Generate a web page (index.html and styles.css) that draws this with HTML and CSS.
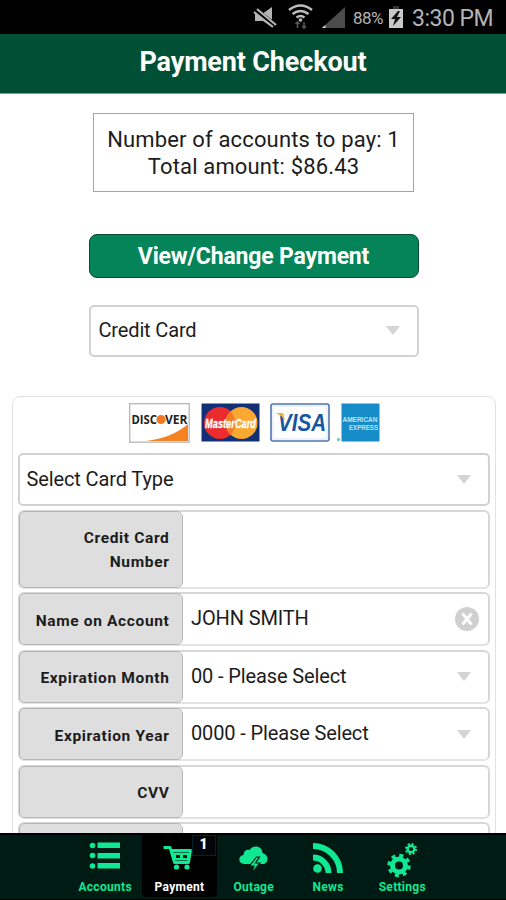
FILE: index.html
```html
<!DOCTYPE html>
<html lang="en">
<head>
<meta charset="utf-8">
<title>Payment Checkout</title>
<link rel="stylesheet" href="styles.css">
</head>
<body>
<div class="screen">
  <div class="status">
    <svg class="status-icons" width="100" height="34" viewBox="0 0 100 34">
      <path d="M8 14h7L25 7v20l-9-6H8z" fill="#b4b4b4"/>
      <path d="M7 9l22 17" stroke="#000" stroke-width="5"/>
      <path d="M7 12l19 15M10 9l19 16" stroke="#b4b4b4" stroke-width="2.200"/>
      <g fill="none" stroke="#bdbdbd" stroke-width="2.400"><path d="M42 10q11.500-9 23 0M45.500 14q8-6 16 0M49.500 17.500q4-3 8 0"/></g>
      <circle cx="53.500" cy="20" r="1.800" fill="#bdbdbd"/>
      <path d="M50.500 28v-6m-2 2l2-2 2 2M57 22v6m-2-2l2 2 2-2" fill="none" stroke="#555" stroke-width="1.600"/>
      <path d="M75 28L98 7v21z" fill="#4b4b4b"/><path d="M75 28l3.500-3v3z" fill="#ddd"/>
    </svg>
    <span class="percent">88%</span>
    <svg class="battery" width="16" height="24" viewBox="0 0 16 24"><path d="M5 1h6v3H5z" fill="#333"/><path d="M1 4h14v19H1z" fill="#c9c9c9"/><path d="M10 6l-7 8h4l-2 7 8-9H9l3-6z" fill="#111"/></svg>
    <span class="clock">3:30 PM</span>
  </div>
  <header class="header"><h1>Payment Checkout</h1></header>
  <main class="content">
    <div class="summary"><span class="count">Number of accounts to pay: 1</span><span class="total">Total amount: $86.43</span></div>
    <div class="button"><span>View/Change Payment</span></div>
    <div class="select method"><span>Credit Card</span><i class="arrow"></i></div>
    <section class="panel">
      <svg class="cards" width="252" height="40" viewBox="0 0 252 40">
        <rect x=".7" y=".7" width="59.500" height="38.500" fill="#fff" stroke="#b9b6b8" stroke-width="1.300"/>
        <path d="M17 38q26-3 42-17v17z" fill="#f58220"/>
        <text x="2.500" y="21" class="discover" textLength="25.500" lengthAdjust="spacingAndGlyphs">DISC</text>
        <text x="36" y="21" class="discover" textLength="22.500" lengthAdjust="spacingAndGlyphs">VER</text>
        <circle cx="32" cy="16.500" r="4.600" fill="#f37a20"/>
        <rect x="72.500" y=".5" width="58" height="38" fill="#123078"/>
        <circle cx="91" cy="20" r="16" fill="#eb2b2d"/><circle cx="112.500" cy="20" r="16" fill="#faa832"/>
        <path d="M101.700 8.200q9 11.800 0 23.600q-9-11.800 0-23.600" fill="#f27a27"/>
        <text x="76" y="24.500" class="mastercard" textLength="51" lengthAdjust="spacingAndGlyphs">MasterCard</text>
        <rect x="142" y="1" width="58" height="37" rx="2" fill="#fff" stroke="#4f75ae" stroke-width="1.600"/>
        <rect x="144" y="3" width="54" height="33" fill="none" stroke="#dbe5f4"/>
        <text x="149" y="27.500" class="visa" textLength="48" lengthAdjust="spacingAndGlyphs">VISA</text>
        <path d="M146 10h8l2 8q-3-6-10-8" fill="#f4b331"/>
        <rect x="212.500" y=".5" width="38" height="38" fill="#168cc8"/>
        <g class="amex"><text x="213.500" y="19" textLength="35" lengthAdjust="spacingAndGlyphs">AMERICAN</text><text x="220" y="27" textLength="29" lengthAdjust="spacingAndGlyphs">EXPRESS</text></g>
        <circle cx="209.500" cy="36.500" r="1.700" fill="#7dc7bd"/>
      </svg>
      <div class="select type"><span>Select Card Type</span><i class="arrow"></i></div>
      <div class="row tall"><div class="label"><span>Credit Card<br>Number</span></div></div>
      <div class="row"><div class="label"><span>Name on Account</span></div><span class="value">JOHN SMITH</span><svg class="clear" width="24" height="24" viewBox="0 0 24 24"><circle cx="12" cy="12" r="12" fill="#d0d0d0"/><path d="M7.500 6.500l9 11m0-11l-9 11" stroke="#fff" stroke-width="2.800"/></svg></div>
      <div class="row"><div class="label"><span>Expiration Month</span></div><span class="value">00 - Please Select</span><i class="arrow"></i></div>
      <div class="row"><div class="label"><span>Expiration Year</span></div><span class="value">0000 - Please Select</span><i class="arrow"></i></div>
      <div class="row"><div class="label"><span>CVV</span></div></div>
      <div class="row"><div class="label"></div></div>
    </section>
  </main>
  <nav class="nav">
    <div class="tab"><svg width="40" height="40" viewBox="0 0 40 40"><g fill="#10e894"><circle cx="7.500" cy="7.500" r="2.800"/><circle cx="7.500" cy="17.500" r="2.800"/><circle cx="7.500" cy="28" r="2.800"/><path d="M12.500 4.500H35v5.500H12.500zM12.500 15H35v5.500H12.500zM12.500 25H35v5.500H12.500z"/></g></svg><span>Accounts</span></div>
    <div class="tab active"><svg width="40" height="40" viewBox="0 0 40 40"><path d="M4.500 9.500H11l4.500 15h14l2-12H12" fill="none" stroke="#10e894" stroke-width="2.800" stroke-linejoin="round"/><path d="M14 18.500h16" stroke="#10e894" stroke-width="8"/><path d="M17 17h4v3h-4zM24 17h4v3h-4z" fill="#00180f"/><circle cx="17.500" cy="29" r="2.600" fill="#10e894"/><circle cx="28" cy="29" r="2.600" fill="#10e894"/></svg><span>Payment</span><b class="badge">1</b></div>
    <div class="tab"><svg width="40" height="40" viewBox="0 0 40 40"><path d="M10 26a4.500 4.500 0 0 1-.5-9c0-4 3-6 6-5 4-6 13-4 13 3 7 2 6 10 1 11z" fill="#10e894"/><path d="M22.500 19l-7 9h4.500l-3 8 9-11h-4.500l4-6z" fill="#10e894" stroke="#001b13" stroke-width="1.200"/></svg><span>Outage</span></div>
    <div class="tab"><svg width="40" height="40" viewBox="0 0 40 40"><circle cx="9.500" cy="30.500" r="4.300" fill="#10e894"/><path d="M5 19.500a15.500 15.500 0 0 1 15.500 15.500M5 8a27 27 0 0 1 27 27" fill="none" stroke="#10e894" stroke-width="6"/></svg><span>News</span></div>
    <div class="tab"><svg width="40" height="40" viewBox="0 0 40 40"><g fill="none" stroke="#10e894"><circle cx="17" cy="27.500" r="6.500" stroke-width="5"/><circle cx="17" cy="27.500" r="10" stroke-width="3.400" stroke-dasharray="3.927 3.927"/><circle cx="29" cy="11" r="3.300" stroke-width="2.400"/><circle cx="29" cy="11" r="5.100" stroke-width="2" stroke-dasharray="2.003 2.003"/></g></svg><span>Settings</span></div>
  </nav>
</div>
</body>
</html>
```
FILE: styles.css
```css
* { box-sizing: border-box; }
body { margin: 0; background: #fff; color: #1c1c1c; font-family: Roboto, "Liberation Sans", sans-serif; }
.screen { width: 506px; height: 900px; display: flex; flex-direction: column; overflow: hidden; }
.status { height: 34px; flex: none; background: #000; display: flex; align-items: center; padding-left: 247px; color: #b4b4b4; }
.status-icons { flex: none; }
.percent { width: 31px; margin-left: 6px; margin-top: 1px; font-size: 17px; letter-spacing: -.5px; }
.battery { margin-left: 4px; margin-top: -1px; flex: none; }
.clock { margin-left: 8px; margin-top: 3px; font-size: 23px; white-space: nowrap; letter-spacing: -.5px; }
.header { height: 60px; flex: none; background: #005035; border-bottom: 1px solid #889990; display: flex; justify-content: center; padding-top: 13px; }
h1 { margin: 0; color: #fff; font-size: 27px; line-height: 31px; font-weight: 700; letter-spacing: -.15px; white-space: nowrap; }
.content { flex: 1; min-height: 0; overflow: hidden; }
.summary { width: 321px; height: 79px; margin: 19px 0 0 93px; border: 1.500px solid #a5a5a5; display: flex; flex-direction: column; align-items: center; padding-top: 12px; font-size: 22px; line-height: 27px; letter-spacing: .16px; white-space: nowrap; }
.button { width: 330px; height: 44px; margin: 42px 0 0 88.500px; border: 1px solid #064a33; border-radius: 8px; background: #048458; display: flex; align-items: center; justify-content: center; color: #fff; font-size: 23px; letter-spacing: -.18px; font-weight: 700; }
.select { display: flex; align-items: center; justify-content: space-between; border: 2px solid #d2d2d2; border-radius: 5px; white-space: nowrap; }
.method { width: 330px; height: 52px; margin: 27px 0 0 88.500px; padding: 0 17px 2px 8px; font-size: 20px; letter-spacing: -.15px; }
.arrow { width: 0; height: 0; border: 7px solid transparent; border-top: 9px solid #d4d4d4; border-bottom: 0; flex: none; }
.panel { width: 484px; height: 520px; margin: 39px 0 0 11.500px; padding: 6px 5px 0 5px; border: 1.500px solid #e2e2e2; border-radius: 8px; }
.cards { display: block; margin-left: 111px; }
.discover { font: 700 12px "Open Sans", sans-serif; fill: #222; }
.mastercard { font: italic 700 12px "Liberation Sans", sans-serif; fill: #fff; stroke: #fff; stroke-width: .3px; }
.visa { font: italic 700 23px "Liberation Sans", sans-serif; fill: #1557a0; }
.amex { font: 700 7px "Liberation Sans", sans-serif; fill: #bce5f4; }
.type { height: 53px; margin-top: 10px; padding: 0 17px 1px 7px; font-size: 20px; letter-spacing: -.12px; }
.row { height: 54px; margin-top: 3.500px; border: 2px solid #d7d7d7; border-bottom-color: #e3e3e3; border-radius: 6px; display: flex; align-items: center; padding-right: 17px; }
.row.tall { height: 79px; }
.label { width: 162.500px; height: 100%; flex: none; outline: 1px solid #b5b5b5; background: #dedede; border-radius: 5px; display: flex; align-items: center; justify-content: flex-end; padding: 3px 12.500px 0 0; text-align: right; font-size: 15.500px; line-height: 24px; font-weight: 700; letter-spacing: .65px; white-space: nowrap; }
.tall .label { padding-top: 1px; }
.value { flex: 1; padding: 0 0 2px 9px; font-size: 20px; letter-spacing: -.13px; white-space: nowrap; }
.clear { margin-right: -8px; flex: none; }
.nav { height: 67px; flex: none; display: flex; background: #001b13; border-top: 2px solid #000; border-bottom: 1px solid #000; padding-left: 68px; }
.tab { width: 74.300px; height: 62px; position: relative; display: flex; flex-direction: column; align-items: center; color: #10e894; font-size: 12px; font-weight: 700; line-height: 14px; letter-spacing: .3px; }
.tab svg { height: 40px; margin-top: 3px; flex: none; }
.tab span { margin-top: 2px; white-space: nowrap; }
.active { background: #000; color: #fff; border-radius: 0 0 4px 4px; }
.badge { position: absolute; right: 1px; top: 0; width: 24px; height: 21px; border: 1px solid #09202b; background: #020608; text-align: center; font-size: 14px; line-height: 17px; }
```
